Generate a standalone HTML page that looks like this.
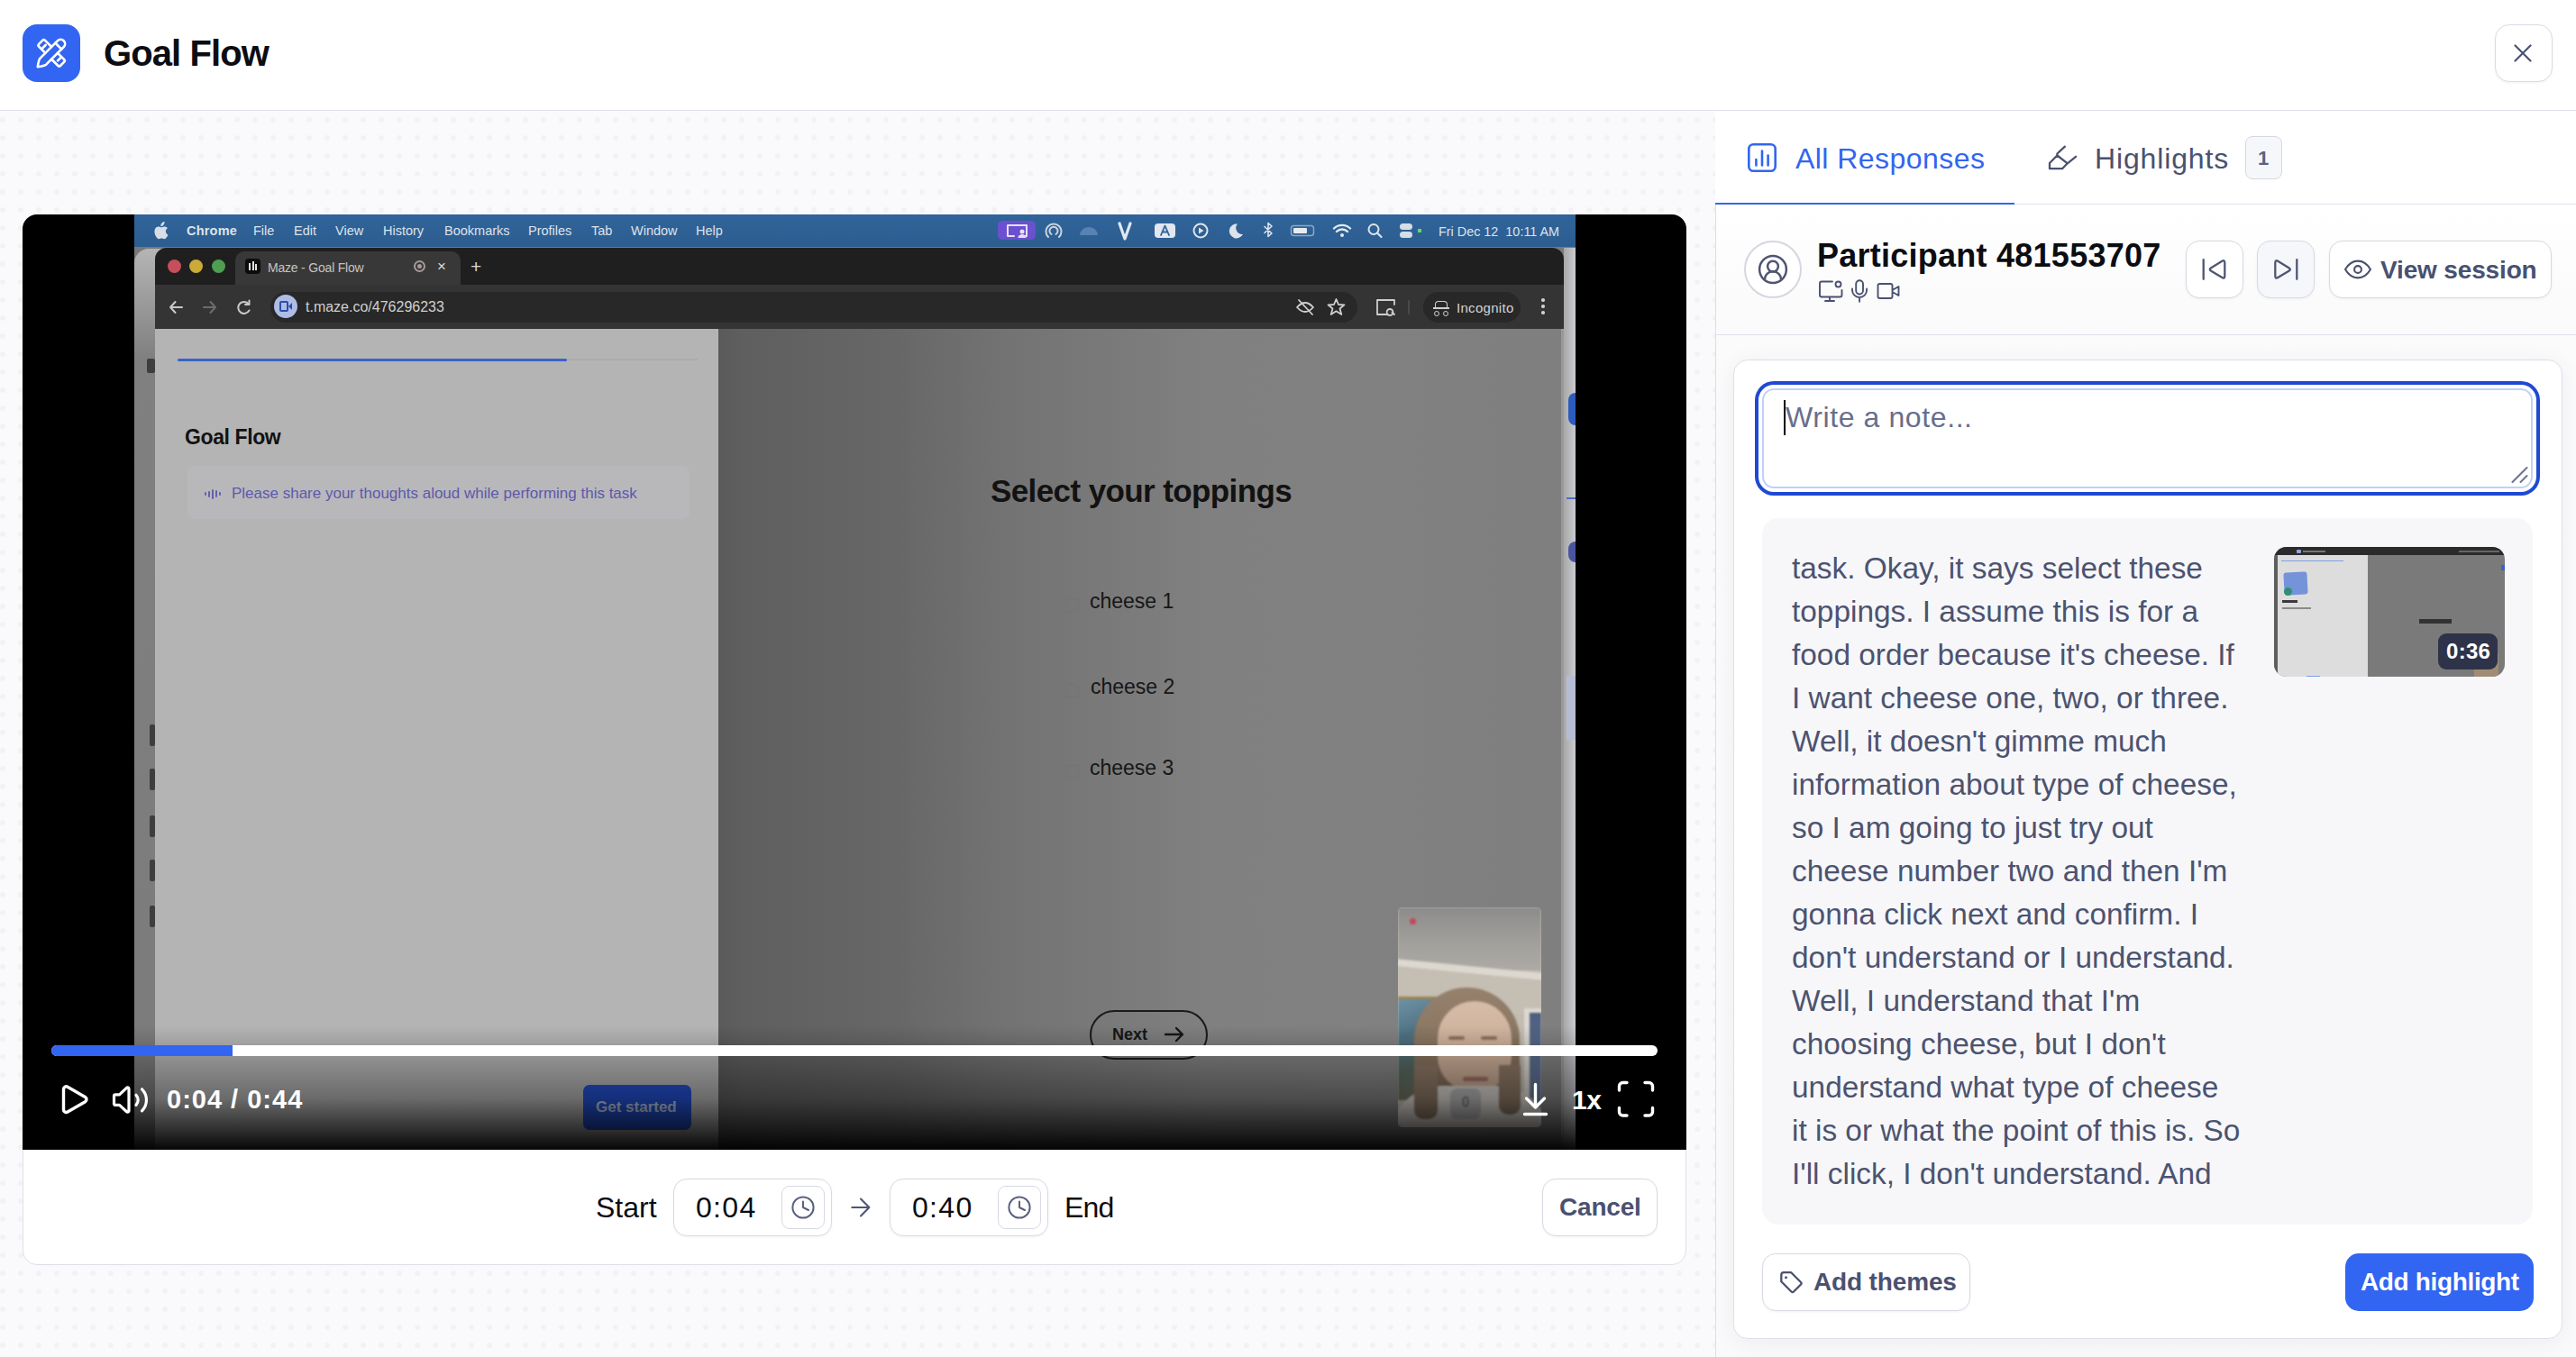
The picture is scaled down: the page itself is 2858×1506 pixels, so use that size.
<!DOCTYPE html>
<html><head><meta charset="utf-8">
<style>
*{box-sizing:border-box;margin:0;padding:0}
html,body{width:2858px;height:1506px;overflow:hidden;background:#fff;font-family:"Liberation Sans",sans-serif;position:relative}
.a{position:absolute}
.t{position:absolute;line-height:1;white-space:nowrap}
#hdr{left:0;top:0;width:2858px;height:123px;background:#fff;border-bottom:1px solid #DEE1E8}
#leftbg{left:0;top:123px;width:1903px;height:1383px;background-color:#FAFAFC;
 background-image:radial-gradient(circle,#F2F2F4 2.5px,rgba(242,242,244,0) 3.3px);background-size:20px 20px;background-position:-7px 0px}
#right{left:1903px;top:123px;width:955px;height:1383px;background:#fff}
#card{left:25px;top:238px;width:1846px;height:1166px;background:#fff;border:1px solid #DDE0E7;border-radius:16px;overflow:hidden}
</style></head>
<body>
<!-- header -->
<div id="hdr" class="a"></div>
<div class="a" style="left:25px;top:27px;width:64px;height:64px;border-radius:16px;background:#3265F1"></div>
<div class="t" style="left:115px;top:39px;font-size:40px;font-weight:700;letter-spacing:-0.9px;color:#0B0D12">Goal Flow</div>
<div class="a" style="left:2767.5px;top:27px;width:64px;height:64px;border-radius:16px;border:1.5px solid #D9DCE4;background:#fff;box-shadow:0 1px 3px rgba(20,30,60,0.06)"></div>
<!-- LEFT -->
<div id="leftbg" class="a"></div>
<div id="card" class="a"></div>
<div id="video" class="a" style="left:25px;top:238px;width:1846px;height:1038px;background:#000;border-radius:16px 16px 0 0;overflow:hidden">
  <div class="a" style="left:124px;top:0;width:1599px;height:1038px;background:#787878;overflow:hidden">
    <!-- menubar (screen coords = page - (149,238)) -->
    <div class="a" style="left:0;top:0;width:1599px;height:36px;background:linear-gradient(#3064998,#2C5D91);background:linear-gradient(#30649A,#2D5D90)"></div>
    <svg class="a" style="left:20px;top:8px" width="18" height="20" viewBox="0 0 18 20"><path d="M12.5 3.5c.9-1.1 1.3-2.3 1.2-3.5-1.2.1-2.5.8-3.3 1.8-.7.8-1.3 2.1-1.1 3.3 1.2.1 2.4-.6 3.2-1.6zM14.9 10.7c0-2.3 1.9-3.400 2-3.500-1.100-1.600-2.800-1.800-3.400-1.800-1.400-.1-2.800.9-3.500.9-.7 0-1.800-.8-3-.8-1.600 0-3 .9-3.800 2.300-1.600 2.800-.4 7 1.200 9.200.8 1.100 1.700 2.400 2.900 2.300 1.200 0 1.600-.7 3-.7s1.800.7 3 .7c1.300 0 2.100-1.100 2.800-2.300.9-1.300 1.300-2.500 1.300-2.600-.1 0-2.500-.9-2.500-3.700z" fill="#D7DEE7"/></svg>
    <div class="t" style="left:58px;top:10.5px;font-size:14.5px;font-weight:700;letter-spacing:0.2px;color:#DCE3EB">Chrome</div>
    <div class="t" style="left:132px;top:10.5px;font-size:14.5px;color:#DCE3EB">File</div>
    <div class="t" style="left:177px;top:10.5px;font-size:14.5px;color:#DCE3EB">Edit</div>
    <div class="t" style="left:223px;top:10.5px;font-size:14.5px;color:#DCE3EB">View</div>
    <div class="t" style="left:276px;top:10.5px;font-size:14.5px;color:#DCE3EB">History</div>
    <div class="t" style="left:344px;top:10.5px;font-size:14.5px;color:#DCE3EB">Bookmarks</div>
    <div class="t" style="left:437px;top:10.5px;font-size:14.5px;color:#DCE3EB">Profiles</div>
    <div class="t" style="left:507px;top:10.5px;font-size:14.5px;color:#DCE3EB">Tab</div>
    <div class="t" style="left:551px;top:10.5px;font-size:14.5px;color:#DCE3EB">Window</div>
    <div class="t" style="left:623px;top:10.5px;font-size:14.5px;color:#DCE3EB">Help</div>
    <!-- status icons -->
    <div class="a" style="left:958px;top:7px;width:42px;height:21px;border-radius:5px;background:#6B50CF"></div>
    <svg class="a" style="left:950px;top:0" width="500" height="36" viewBox="950 0 500 36" fill="none" stroke-linecap="round" stroke-linejoin="round">
      <path d="M969 24 V12 h21 v12 h-5 M976 24 h-7" stroke="#E6E0F8" stroke-width="2"/>
      <circle cx="985" cy="19" r="2.5" fill="#E6E0F8"/><path d="M980.5 26 a4.5 4 0 0 1 9 0" fill="#E6E0F8"/>
      <path d="M1014 25 a8.5 8.5 0 1 1 12 0 M1017.5 22 a4.5 4.5 0 1 1 5 0" stroke="#C9D3DF" stroke-width="2"/>
      <path d="M1049 23 a10 9 0 0 1 20 0 z" fill="#5683B4"/>
      <path d="M1093 10 L1099 27 L1105 10" stroke="#E2E8EF" stroke-width="3.2"/>
      <rect x="1132" y="10" width="23" height="16" rx="4" fill="#E2E8EF"/>
      <path d="M1139 23 L1143.5 12.5 L1148 23 M1140.5 19.5 h6" stroke="#30649A" stroke-width="1.8"/>
      <circle cx="1183" cy="18" r="7.5" stroke="#DCE3EB" stroke-width="2"/><path d="M1181 14.5 v7 l5.5 -3.5z" fill="#DCE3EB"/>
      <path d="M1224 10.5 a8 8 0 1 0 6 11.5 a7 7 0 0 1 -6 -11.5z" fill="#DCE3EB"/>
      <path d="M1254 13.5 l8 7.5 l-4 3.5 v-15 l4 3.5 l-8 7.5" stroke="#DCE3EB" stroke-width="1.6"/>
      <rect x="1283.5" y="12.5" width="25" height="11" rx="3" stroke="#8FA6C0" stroke-width="1.5"/><rect x="1286" y="15" width="15" height="6" rx="1" fill="#E6EBF1"/>
      <path d="M1331 15.5 a13 13 0 0 1 18 0 M1334 19 a8.5 8.5 0 0 1 12 0" stroke="#E2E8EF" stroke-width="2.4"/><circle cx="1340" cy="23" r="2" fill="#E2E8EF"/>
      <circle cx="1375" cy="16.5" r="5.5" stroke="#DCE3EB" stroke-width="2"/><path d="M1379 20.5 l4.5 4.5" stroke="#DCE3EB" stroke-width="2.2"/>
      <rect x="1404" y="10" width="14" height="7" rx="3.5" fill="#D5DDE6"/><rect x="1404" y="19" width="14" height="7" rx="3.5" fill="#D5DDE6"/>
      <rect x="1424" y="16" width="4" height="4" fill="#6BD36B"/>
    </svg>
    <div class="t" style="left:1447px;top:11.5px;font-size:14.4px;color:#DCE3EB">Fri Dec 12&nbsp;&nbsp;10:11 AM</div>
    <!-- window behind (left strip) -->
    <div class="a" style="left:0;top:38px;width:60px;height:1000px;border-radius:16px 0 0 0;background:linear-gradient(#B5B5B5,#808080 12%,#7B7B7B)"></div>
    <div class="a" style="left:14px;top:160px;width:9px;height:16px;border-radius:2px;background:#3E3E3E"></div>
    <div class="a" style="left:17px;top:566px;width:6px;height:24px;border-radius:2px;background:#3E3E3E"></div>
    <div class="a" style="left:17px;top:615px;width:6px;height:24px;border-radius:2px;background:#3E3E3E"></div>
    <div class="a" style="left:17px;top:667px;width:6px;height:24px;border-radius:2px;background:#3E3E3E"></div>
    <div class="a" style="left:17px;top:716px;width:6px;height:24px;border-radius:2px;background:#3E3E3E"></div>
    <div class="a" style="left:17px;top:767px;width:6px;height:24px;border-radius:2px;background:#3E3E3E"></div>
    <!-- browser (browser coords = page - (172,275)) -->
    <div class="a" style="left:23px;top:37px;width:1563px;height:1001px;background:#777;border-radius:13px 13px 0 0;overflow:hidden">
      <div class="a" style="left:0;top:0;width:1563px;height:41px;background:#1F1F1F"></div>
      <div class="a" style="left:89px;top:4px;width:250px;height:37px;border-radius:10px 10px 0 0;background:#383838"></div>
      <div class="a" style="left:13.5px;top:13px;width:15px;height:15px;border-radius:50%;background:#C64F5C"></div>
      <div class="a" style="left:38px;top:13px;width:15px;height:15px;border-radius:50%;background:#CCAA38"></div>
      <div class="a" style="left:62.5px;top:13px;width:15px;height:15px;border-radius:50%;background:#4F9F50"></div>
      <div class="a" style="left:100px;top:12px;width:17px;height:17px;border-radius:4px;background:#0C0C0C"></div>
      <div class="a" style="left:104px;top:17px;width:2px;height:8px;background:#E0E0E0"></div>
      <div class="a" style="left:107.5px;top:15px;width:2px;height:10px;background:#E0E0E0"></div>
      <div class="a" style="left:111px;top:18px;width:2px;height:7px;background:#E0E0E0"></div>
      <div class="t" style="left:125px;top:14.5px;font-size:14px;letter-spacing:-0.2px;color:#C4C4C4">Maze - Goal Flow</div>
      <div class="a" style="left:287px;top:14px;width:13px;height:13px;border-radius:50%;border:2px solid #A69A9A"></div>
      <div class="a" style="left:291px;top:18px;width:5px;height:5px;border-radius:50%;background:#A69A9A"></div>
      <div class="t" style="left:313px;top:12px;font-size:17px;color:#D8D8D8">&#215;</div>
      <div class="t" style="left:350px;top:10px;font-size:21px;color:#D8D8D8">+</div>
      <div class="a" style="left:0;top:41px;width:1563px;height:49px;background:#343434"></div>
      <svg class="a" style="left:0;top:41px" width="130" height="49" viewBox="0 0 130 49" fill="none" stroke-linecap="round" stroke-linejoin="round">
        <path d="M17 25 H30 M22.5 19 L17 25 L22.5 31" stroke="#C8C8C8" stroke-width="2"/>
        <path d="M54 25 H67 M61.5 19 L67 25 L61.5 31" stroke="#6C6C6C" stroke-width="2"/>
        <path d="M104 21.5 A6.5 6.5 0 1 0 104.5 28.5 M104.5 17.5 V22 H100" stroke="#C8C8C8" stroke-width="2"/>
      </svg>
      <div class="a" style="left:128px;top:49px;width:1206px;height:34px;border-radius:17px;background:#282828"></div>
      <div class="a" style="left:132px;top:52px;width:26px;height:26px;border-radius:50%;background:#AFBDE6"></div>
      <div class="a" style="left:138px;top:59px;width:10px;height:12px;border-radius:2px;border:2px solid #2B4FA8"></div>
      <div class="a" style="left:148px;top:61px;width:4px;height:8px;background:#2B4FA8;clip-path:polygon(0 50%,100% 0,100% 100%)"></div>
      <div class="t" style="left:167px;top:57.5px;font-size:16px;color:#CFCFCF">t.maze.co/476296233</div>
      <svg class="a" style="left:1260px;top:41px" width="303" height="49" viewBox="0 0 303 49" fill="none" stroke-linecap="round" stroke-linejoin="round">
        <path d="M7 25 Q16 15 25 25 Q16 35 7 25 Z M9 17 L24 33" stroke="#CFCFCF" stroke-width="1.8"/>
        <path d="M50.5 16 L53 22 L59.5 22.3 L54.5 26.5 L56.3 33 L50.5 29.3 L44.7 33 L46.5 26.5 L41.5 22.3 L48 22 Z" stroke="#CFCFCF" stroke-width="1.8"/>
        <path d="M108 33 H96 V17 H115 V22 M110 27 a3.5 3.5 0 1 0 0.1 0 M112.5 30.5 L115 33" stroke="#CFCFCF" stroke-width="1.8"/>
        <path d="M131 18 V32" stroke="#4A4A4A" stroke-width="2"/>
      </svg>
      <div class="a" style="left:1407px;top:49px;width:108px;height:34px;border-radius:17px;background:#282828"></div>
      <div class="a" style="left:1420px;top:59px;width:14px;height:7px;border-radius:4px 4px 0 0;border:1.6px solid #CFCFCF;border-bottom:0"></div>
      <div class="a" style="left:1418px;top:66px;width:18px;height:2px;background:#CFCFCF"></div>
      <div class="a" style="left:1419px;top:70px;width:6px;height:6px;border-radius:50%;border:1.6px solid #CFCFCF"></div>
      <div class="a" style="left:1429px;top:70px;width:6px;height:6px;border-radius:50%;border:1.6px solid #CFCFCF"></div>
      <div class="t" style="left:1444px;top:58.5px;font-size:15px;letter-spacing:0.3px;color:#D4D4D4">Incognito</div>
      <div class="a" style="left:1538px;top:56px;width:3.5px;height:3.5px;border-radius:50%;background:#CFCFCF;box-shadow:0 7px 0 #CFCFCF,0 14px 0 #CFCFCF"></div>
      <!-- page -->
      <div class="a" style="left:0;top:90px;width:625px;height:911px;background:#B4B4B4"></div>
      <div class="a" style="left:625px;top:90px;width:938px;height:911px;background:linear-gradient(90deg,#5A5A5A,#5F5F5F 3%,#676767 21%,#737373 34%,#808080 58%,#818181 75%,#7F7F7F)"></div>
      <div class="a" style="left:25px;top:122.5px;width:432px;height:3px;border-radius:2px;background:#3A63C6"></div>
      <div class="a" style="left:457px;top:123px;width:145px;height:2px;background:#ABABAB"></div>
      <div class="t" style="left:33px;top:199px;font-size:23px;font-weight:700;letter-spacing:-0.4px;color:#121212">Goal Flow</div>
      <div class="a" style="left:36px;top:242px;width:557px;height:59px;border-radius:8px;background:#B8B8BB"></div>
      
      <div class="a" style="left:55px;top:271.0px;width:2px;height:4px;border-radius:1px;background:#6560B0"></div><div class="a" style="left:59px;top:269.5px;width:2px;height:7px;border-radius:1px;background:#6560B0"></div><div class="a" style="left:63px;top:267.5px;width:2px;height:11px;border-radius:1px;background:#6560B0"></div><div class="a" style="left:67px;top:269.0px;width:2px;height:8px;border-radius:1px;background:#6560B0"></div><div class="a" style="left:71px;top:271.0px;width:2px;height:4px;border-radius:1px;background:#6560B0"></div>
      <div class="t" style="left:85px;top:263.5px;font-size:17px;color:#5E59AC">Please share your thoughts aloud while performing this task</div>
      <div class="t" style="left:927px;top:252px;font-size:35px;font-weight:700;letter-spacing:-0.6px;color:#121212">Select your toppings</div>
      <div class="a" style="left:1010px;top:389px;width:15px;height:15px;border-radius:3px;border:1.5px solid rgba(90,90,90,0.1)"></div>
      <div class="a" style="left:1010px;top:484px;width:15px;height:15px;border-radius:3px;border:1.5px solid rgba(90,90,90,0.1)"></div>
      <div class="a" style="left:1010px;top:574px;width:15px;height:15px;border-radius:3px;border:1.5px solid rgba(90,90,90,0.1)"></div>
      <div class="t" style="left:1037px;top:381px;font-size:23px;color:#161616">cheese 1</div>
      <div class="t" style="left:1038px;top:476px;font-size:23px;color:#161616">cheese 2</div>
      <div class="t" style="left:1037px;top:566px;font-size:23px;color:#161616">cheese 3</div>
      <div class="a" style="left:1037px;top:846px;width:131px;height:55px;border-radius:28px;border:2.5px solid #1A1A1A"></div>
      <div class="t" style="left:1062px;top:864px;font-size:18px;font-weight:700;color:#161616">Next</div>
      <svg class="a" style="left:1118px;top:862px" width="26" height="22" viewBox="0 0 26 22" fill="none" stroke="#161616" stroke-width="2.4" stroke-linecap="round" stroke-linejoin="round"><path d="M3 11 H22 M15 4 L22 11 L15 18"/></svg>
      <div class="a" style="left:475px;top:929px;width:120px;height:50px;border-radius:7px;background:#2350D0"></div>
      <div class="t" style="left:489px;top:945px;font-size:17px;font-weight:700;color:#C0CBEA">Get started</div>
      <!-- webcam container bg -->
      <div class="a" style="left:1560px;top:90px;width:3px;height:911px;background:#9A9A9A"></div>
    </div>
    <!-- right strip behind window -->
    <div class="a" style="left:1586px;top:37px;width:13px;height:1001px;background:linear-gradient(90deg,#A8A8A8,#C9CBD0)"></div>
    <div class="a" style="left:1591px;top:198px;width:8px;height:36px;border-radius:8px 0 0 8px;background:#2E5BBE"></div>
    <div class="a" style="left:1589px;top:314px;width:10px;height:2px;background:#4A70C8"></div>
    <div class="a" style="left:1591px;top:363px;width:8px;height:23px;border-radius:8px 0 0 8px;background:#4A55A0"></div>
    <div class="a" style="left:1589px;top:512px;width:10px;height:71px;background:#B4BDD3"></div>
    <!-- webcam (screen coords) -->
    <div class="a" style="left:1402px;top:769px;width:159px;height:244px;border-radius:5px;overflow:hidden;background:#C2BCB1"><div class="a" style="left:0;top:0;width:159px;height:244px;filter:blur(1.3px)">
      <div class="a" style="left:0;top:0;width:159px;height:70px;background:linear-gradient(#8C8C8B,#A3A19D 60%,#ADAAA5)"></div>
      <div class="a" style="left:-5px;top:57px;width:170px;height:8px;background:#DCD8D0;transform:rotate(5.5deg);transform-origin:0 0"></div>
      <div class="a" style="left:-5px;top:65px;width:170px;height:40px;background:#C4BEB3;transform:rotate(5.5deg);transform-origin:0 0"></div>
      <div class="a" style="left:13px;top:12px;width:7px;height:7px;border-radius:50%;background:#C8465A"></div>
      <div class="a" style="left:0;top:101px;width:44px;height:113px;background:linear-gradient(160deg,#6E93A6,#4F7080 35%,#56685E 65%,#7A7662)"></div>
      <div class="a" style="left:0;top:99px;width:46px;height:3px;background:#9A8452"></div>
      <div class="a" style="left:140px;top:112px;width:19px;height:132px;background:#DCD8D0"></div>
      <div class="a" style="left:146px;top:117px;width:13px;height:127px;background:linear-gradient(#4E5E7E,#6A7FA0)"></div>
      <div class="a" style="left:18px;top:89px;width:117px;height:168px;border-radius:58px 58px 22px 22px;background:linear-gradient(#95816C,#7E6A57 70%,#8A7866)"></div>
      <div class="a" style="left:44px;top:104px;width:82px;height:100px;border-radius:41px 41px 38px 38px;background:linear-gradient(#D6BCA8,#CDAF99 55%,#C4A690)"></div>
      <div class="a" style="left:56px;top:143px;width:18px;height:4px;border-radius:3px;background:#8A7060"></div>
      <div class="a" style="left:92px;top:143px;width:18px;height:4px;border-radius:3px;background:#8A7060"></div>
      <div class="a" style="left:72px;top:188px;width:28px;height:5px;border-radius:3px;background:#9C6E62"></div>
      <div class="a" style="left:-10px;top:198px;width:179px;height:60px;border-radius:60px 60px 0 0;background:#D6D2CC"></div>
      <div class="a" style="left:18px;top:175px;width:26px;height:60px;border-radius:0 0 10px 10px;background:#8A7664"></div>
      <div class="a" style="left:112px;top:175px;width:24px;height:55px;border-radius:0 0 10px 10px;background:#8A7664"></div>
      <div class="a" style="left:58px;top:201px;width:34px;height:34px;border-radius:8px;background:#B4B4B4"></div>
      <div class="a" style="left:72px;top:210px;width:6px;height:11px;border-radius:3px;border:1.5px solid #3C3C3C"></div>
    </div></div>
  </div>
  <!-- bottom gradient -->
  <div class="a" style="left:0;top:900px;width:1846px;height:138px;background:linear-gradient(rgba(0,0,0,0),rgba(0,0,0,0.22) 29%,rgba(0,0,0,0.41) 59%,rgba(0,0,0,0.77) 86%,rgba(0,0,0,0.97))"></div>
  <!-- progress -->
  <div class="a" style="left:32px;top:922px;width:1782px;height:12px;border-radius:6px;background:#fff;overflow:hidden">
    <div class="a" style="left:0;top:0;width:201px;height:12px;background:#3265F1"></div>
  </div>
  <div class="t" style="left:160px;top:967.5px;font-size:29px;font-weight:700;letter-spacing:1px;color:#fff">0:04 / 0:44</div>
  <div class="t" style="left:1719px;top:968px;font-size:30px;font-weight:700;letter-spacing:-0.5px;color:#fff">1x</div>
</div>
<!-- controls row -->
<div class="t" style="left:661px;top:1324.3px;font-size:32px;color:#0B0D12">Start</div>
<div class="a" style="left:747px;top:1308px;width:176px;height:64px;border-radius:15px;border:1.5px solid #D7DAE3;background:#fff;box-shadow:0 1px 3px rgba(20,30,60,0.06)"></div>
<div class="a" style="left:867px;top:1316px;width:48px;height:48px;border-radius:9px;border:1.5px solid #D7DAE3;background:#fff"></div>
<div class="t" style="left:772px;top:1324.3px;font-size:32px;letter-spacing:1.3px;color:#0B0D12">0:04</div>
<div class="a" style="left:987px;top:1308px;width:176px;height:64px;border-radius:15px;border:1.5px solid #D7DAE3;background:#fff;box-shadow:0 1px 3px rgba(20,30,60,0.06)"></div>
<div class="a" style="left:1107px;top:1316px;width:48px;height:48px;border-radius:9px;border:1.5px solid #D7DAE3;background:#fff"></div>
<div class="t" style="left:1012px;top:1324.3px;font-size:32px;letter-spacing:1.3px;color:#0B0D12">0:40</div>
<div class="t" style="left:1181px;top:1324.3px;font-size:32px;letter-spacing:-0.8px;color:#0B0D12">End</div>
<div class="a" style="left:1711px;top:1308px;width:128px;height:64px;border-radius:15px;border:1.5px solid #D7DAE3;background:#fff;box-shadow:0 1px 3px rgba(20,30,60,0.06)"></div>
<div class="t" style="left:1730px;top:1326.3px;font-size:28px;font-weight:700;letter-spacing:-0.2px;color:#4A5170">Cancel</div>
<!-- RIGHT PANEL -->
<div id="right" class="a"></div>
<div class="a" style="left:1903px;top:226px;width:1px;height:1280px;background:#DCDFE7"></div>
<div class="a" style="left:1904px;top:227px;width:954px;height:1279px;background:linear-gradient(#FFFFFF,#FBFBFC 8%,#FAFAFC)"></div>
<div class="a" style="left:1904px;top:226px;width:954px;height:1px;background:#DEE1E8"></div>
<div class="a" style="left:1903px;top:224.8px;width:332px;height:2.4px;background:#3265F1"></div>
<div class="t" style="left:1992px;top:160px;font-size:32px;letter-spacing:0.45px;color:#3265F1">All Responses</div>
<div class="t" style="left:2324px;top:160px;font-size:32px;letter-spacing:0.85px;color:#4A5170">Highlights</div>
<div class="a" style="left:2491px;top:151px;width:41px;height:48px;border-radius:8px;border:1.5px solid #D5D8E1;background:#F6F7FA"></div>
<div class="t" style="left:2505px;top:164.5px;font-size:22px;font-weight:700;color:#5B6282">1</div>
<!-- participant row -->
<div class="a" style="left:1904px;top:371px;width:954px;height:1px;background:#DEE1E8"></div>
<div class="a" style="left:1935px;top:267px;width:64px;height:64px;border-radius:50%;border:2px solid #D5D7DF;background:#fff"></div>
<div class="t" style="left:2016px;top:265.8px;font-size:36px;font-weight:700;letter-spacing:0.25px;color:#0B0D12">Participant 481553707</div>
<div class="a" style="left:2425px;top:267px;width:64px;height:64px;border-radius:15px;border:1.5px solid #D7DAE3;background:#fff;box-shadow:0 1px 3px rgba(20,30,60,0.06)"></div>
<div class="a" style="left:2504px;top:267px;width:64px;height:64px;border-radius:15px;border:1.5px solid #D7DAE3;background:#F6F7FA;box-shadow:0 1px 3px rgba(20,30,60,0.06)"></div>
<div class="a" style="left:2584px;top:267px;width:247px;height:64px;border-radius:15px;border:1.5px solid #D7DAE3;background:#fff;box-shadow:0 1px 3px rgba(20,30,60,0.06)"></div>
<div class="t" style="left:2641px;top:285.6px;font-size:28px;font-weight:700;letter-spacing:-0.15px;color:#4A5170">View session</div>
<!-- main card -->
<div class="a" style="left:1923px;top:399px;width:920px;height:1087px;border-radius:16px;border:1px solid #DDE0E7;background:#fff;box-shadow:0 4px 28px rgba(30,40,70,0.06)"></div>
<div class="a" style="left:1955px;top:431px;width:855px;height:111px;border-radius:13px;border:2px solid #BFD1FA;background:#fff;box-shadow:0 0 0 4px #fff,0 0 0 8px #1F49D2"></div>
<div class="a" style="left:1979px;top:444px;width:2px;height:39px;background:#000"></div>
<div class="t" style="left:1981px;top:447px;font-size:32px;letter-spacing:0.6px;color:#686E8C">Write a note...</div>
<div class="a" style="left:1955px;top:575px;width:855px;height:784px;border-radius:18px;background:#F7F7FA"></div>
<div class="a" style="left:1988px;top:606.7px;font-size:33.4px;line-height:48px;color:#4C536F;white-space:nowrap">task. Okay, it says select these<br>toppings. I assume this is for a<br>food order because it's cheese. If<br>I want cheese one, two, or three.<br>Well, it doesn't gimme much<br>information about type of cheese,<br>so I am going to just try out<br>cheese number two and then I'm<br>gonna click next and confirm. I<br>don't understand or I understand.<br>Well, I understand that I'm<br>choosing cheese, but I don't<br>understand what type of cheese<br>it is or what the point of this is. So<br>I'll click, I don't understand. And</div>
<!-- thumbnail -->
<div class="a" style="left:2523px;top:607px;width:256px;height:144px;border-radius:14px;overflow:hidden;background:#7A7A7A">
  <div class="a" style="left:0;top:0;width:256px;height:9px;background:#2B2B2B"></div>
  <div class="a" style="left:25px;top:3px;width:5px;height:4px;border-radius:1px;background:#8FA5DD"></div>
  <div class="a" style="left:32px;top:4px;width:25px;height:1.5px;background:#777"></div>
  <div class="a" style="left:205px;top:4px;width:45px;height:1.5px;background:#666"></div>
  <div class="a" style="left:4px;top:9px;width:100px;height:135px;background:#DDDDDD"></div>
  <div class="a" style="left:8px;top:15px;width:69px;height:1px;background:#7DA0E2"></div>
  <div class="a" style="left:11px;top:28px;width:26px;height:25px;border-radius:3px;background:#7593D8;transform:rotate(-3deg)"></div>
  <div class="a" style="left:11px;top:45px;width:9px;height:9px;border-radius:50%;background:#2F8F74"></div>
  <div class="a" style="left:9px;top:59px;width:17px;height:3px;background:#3A3A3A"></div>
  <div class="a" style="left:9px;top:67px;width:32px;height:1.5px;background:#8A8A8A"></div>
  <div class="a" style="left:0;top:9px;width:4px;height:135px;background:#5E5E5E"></div>
  <div class="a" style="left:161px;top:80px;width:36px;height:5px;background:rgba(20,20,20,0.7)"></div>
  <div class="a" style="left:252px;top:20px;width:4px;height:6px;background:#3A63C6"></div>
  <div class="a" style="left:36px;top:143px;width:15px;height:1px;background:#7DA0E2"></div>
  <div class="a" style="left:222px;top:118px;width:27px;height:26px;background:#A08C74"></div>
</div>
<div class="a" style="left:2705px;top:703px;width:66px;height:40px;border-radius:9px;background:#2E3349"></div>
<div class="t" style="left:2714px;top:711px;font-size:24px;font-weight:700;letter-spacing:0.3px;color:#fff">0:36</div>
<!-- bottom buttons -->
<div class="a" style="left:1955px;top:1391px;width:231px;height:64px;border-radius:15px;border:1.5px solid #D7DAE3;background:#fff;box-shadow:0 1px 3px rgba(20,30,60,0.06)"></div>
<div class="t" style="left:2012px;top:1409.3px;font-size:28px;font-weight:700;letter-spacing:-0.15px;color:#4A5170">Add themes</div>
<div class="a" style="left:2602px;top:1391px;width:209px;height:64px;border-radius:15px;background:#3265F1"></div>
<div class="t" style="left:2619px;top:1409.3px;font-size:28px;font-weight:700;letter-spacing:-0.35px;color:#fff">Add highlight</div>
<svg class="a" style="left:0;top:0;z-index:10" width="2858" height="1506" viewBox="0 0 2858 1506" fill="none" stroke-linecap="round" stroke-linejoin="round">
 <!-- logo pencil-ruler -->
 <g stroke="#fff" stroke-width="1.55" transform="translate(36.63 38.33) scale(1.71)">
   <path d="M8.5 19.5 L20 8 A2.83 2.83 0 0 0 16 4 L4.5 15.5 Q3.7 16.4 3 21 Q7.6 20.3 8.5 19.5 Z"/>
   <path d="M14.5 5.5l4 4"/>
   <path d="M12 8 L7.85 3.85 Q7 3 6.15 3.85 L3.85 6.15 Q3 7 3.85 7.85 L8 12"/>
   <path d="M8.2 6.8 L6 9 M16 17 L18.2 14.8"/>
   <path d="M16 12 L20.15 16.15 Q21 17 20.15 17.85 L17.85 20.15 Q17 21 16.15 20.15 L12 16"/>
 </g>
 <!-- close X -->
 <path d="M2790.5 50.5 L2807.5 67.5 M2807.5 50.5 L2790.5 67.5" stroke="#4A5170" stroke-width="2.2"/>
 <!-- tab chart icon -->
 <rect x="1940.3" y="160.3" width="29.4" height="29.4" rx="5" stroke="#3265F1" stroke-width="2.6"/>
 <path d="M1948.4 177 V183.5 M1955 167.5 V183.5 M1961.6 172.5 V183.5" stroke="#3265F1" stroke-width="2.6"/>
 <!-- highlight icon -->
 <path d="M2290.9 162.7 L2282.4 170.5 L2282.4 172.5 L2274 181 L2274 187.2 L2288 187.2 L2293.8 181.3 L2303.1 173.8 M2282.4 172.5 L2293.8 181.3" stroke="#4A5170" stroke-width="2.3"/>
 <!-- avatar user icon -->
 <circle cx="1967" cy="299" r="14.9" stroke="#4F5573" stroke-width="2.5"/>
 <circle cx="1967" cy="295.6" r="5.9" stroke="#4F5573" stroke-width="2.5"/>
 <path d="M1957.8 310.4 A9.2 9.2 0 0 1 1976.2 310.4" stroke="#4F5573" stroke-width="2.5"/>
 <!-- small device icons -->
 <path d="M2033 312.5 H2021 a2 2 0 0 0 -2 2 v13 a2 2 0 0 0 2 2 h20.5 a2 2 0 0 0 2 -2 v-5.5 M2025 334 h10 M2030 329.5 v4.5" stroke="#4A5170" stroke-width="1.9"/>
 <circle cx="2039.5" cy="315.5" r="3" stroke="#4A5170" stroke-width="1.9"/>
 <path d="M2059.2 315.1 a3.9 3.9 0 0 1 7.8 0 v7.5 a3.9 3.9 0 0 1 -7.8 0 z M2055 320.5 v1.5 a8.05 8.05 0 0 0 16.1 0 v-1.5 M2063.1 330.2 v4.6" stroke="#4A5170" stroke-width="1.9"/>
 <path d="M2083.5 317 a2 2 0 0 1 2 -2 h12 a2 2 0 0 1 2 2 v12 a2 2 0 0 1 -2 2 h-12 a2 2 0 0 1 -2 -2 z M2099.5 322 l7 -4 v10 l-7 -4" stroke="#4A5170" stroke-width="1.9"/>
 <!-- prev / next -->
 <path d="M2444.7 288.2 V309.8 M2548.3 288.2 V309.8" stroke="#4F5573" stroke-width="2.3"/>
 <path d="M2468.3 291.5 L2468.3 306.3 Q2468.3 309.7 2465.4 307.95 L2453.2 300.65 Q2450.3 298.9 2453.2 297.15 L2465.4 289.85 Q2468.3 288.1 2468.3 291.5 Z" stroke="#4F5573" stroke-width="2.3"/>
 <path d="M2524.3 291.5 L2524.3 306.3 Q2524.3 309.7 2527.2 307.95 L2539.4 300.65 Q2542.3 298.9 2539.4 297.15 L2527.2 289.85 Q2524.3 288.1 2524.3 291.5 Z" stroke="#4F5573" stroke-width="2.3"/>
 <!-- eye -->
 <path d="M2630 299 c-3.73 6.22 -8.4 9.34 -14 9.34 c-5.6 0 -10.27 -3.11 -14 -9.34 c3.73 -6.22 8.4 -9.34 14 -9.34 c5.6 0 10.27 3.11 14 9.34 z" stroke="#4A5170" stroke-width="2.1"/>
 <circle cx="2616" cy="299" r="3.9" stroke="#4A5170" stroke-width="2.1"/>
 <!-- resize handle -->
 <path d="M2787.5 535 L2803.5 519 M2796.5 535 L2803.5 528" stroke="#6B7394" stroke-width="2"/>
 <!-- tag icon -->
 <path d="M1979 1412.2 H1987.2 L1998 1423 a1.8 1.8 0 0 1 0 2.5 L1990 1433.5 a1.8 1.8 0 0 1 -2.5 0 L1976.3 1422.3 V1415 a2.8 2.8 0 0 1 2.7 -2.8 z" stroke="#4A5170" stroke-width="2.3"/>
 <circle cx="1981.5" cy="1417.7" r="1.5" fill="#4A5170" stroke="none"/>
 <!-- clocks -->
 <circle cx="891" cy="1340" r="11.6" stroke="#5A6180" stroke-width="2"/>
 <path d="M891 1333.5 V1340 L897 1343" stroke="#5A6180" stroke-width="2"/>
 <circle cx="1131" cy="1340" r="11.6" stroke="#5A6180" stroke-width="2"/>
 <path d="M1131 1333.5 V1340 L1137 1343" stroke="#5A6180" stroke-width="2"/>
 <!-- arrow -->
 <path d="M945.3 1340 H964.4 M955 1330.6 L964.4 1340 L955 1349.4" stroke="#4F5573" stroke-width="2.1"/>
 <!-- video play -->
 <path transform="translate(0 0.8)" d="M70.5 1208 a3 3 0 0 1 4.5 -2.6 l19.5 11.3 a3 3 0 0 1 0 5.2 l-19.5 11.3 a3 3 0 0 1 -4.5 -2.6 z" stroke="#fff" stroke-width="3.4"/>
 <!-- volume -->
 <path transform="translate(0 0.8)" d="M140.5 1206.5 a1.5 1.5 0 0 1 2.5 1 v24.5 a1.5 1.5 0 0 1 -2.5 1 l-8 -7.5 h-4.5 a1.5 1.5 0 0 1 -1.5 -1.5 v-8.5 a1.5 1.5 0 0 1 1.5 -1.5 h4.5 z" stroke="#fff" stroke-width="3.2"/>
 <path transform="translate(0 0.8)" d="M151 1214.5 a8 8 0 0 1 0 11 M157.5 1208 a17 17 0 0 1 0 24" stroke="#fff" stroke-width="3.2"/>
 <!-- download -->
 <path d="M1703.5 1203.5 V1229 M1693.5 1219 L1703.5 1229 L1713.5 1219 M1691.5 1236.5 H1715.5" stroke="#fff" stroke-width="3.4"/>
 <!-- fullscreen -->
 <path d="M1796.5 1210 v-4.5 a4 4 0 0 1 4 -4 h4.5 M1825 1201.5 h4.5 a4 4 0 0 1 4 4 v4.5 M1833.5 1229.5 v4.5 a4 4 0 0 1 -4 4 h-4.5 M1805 1238 h-4.5 a4 4 0 0 1 -4 -4 v-4.5" stroke="#fff" stroke-width="3.4"/>
</svg>
</body></html>
